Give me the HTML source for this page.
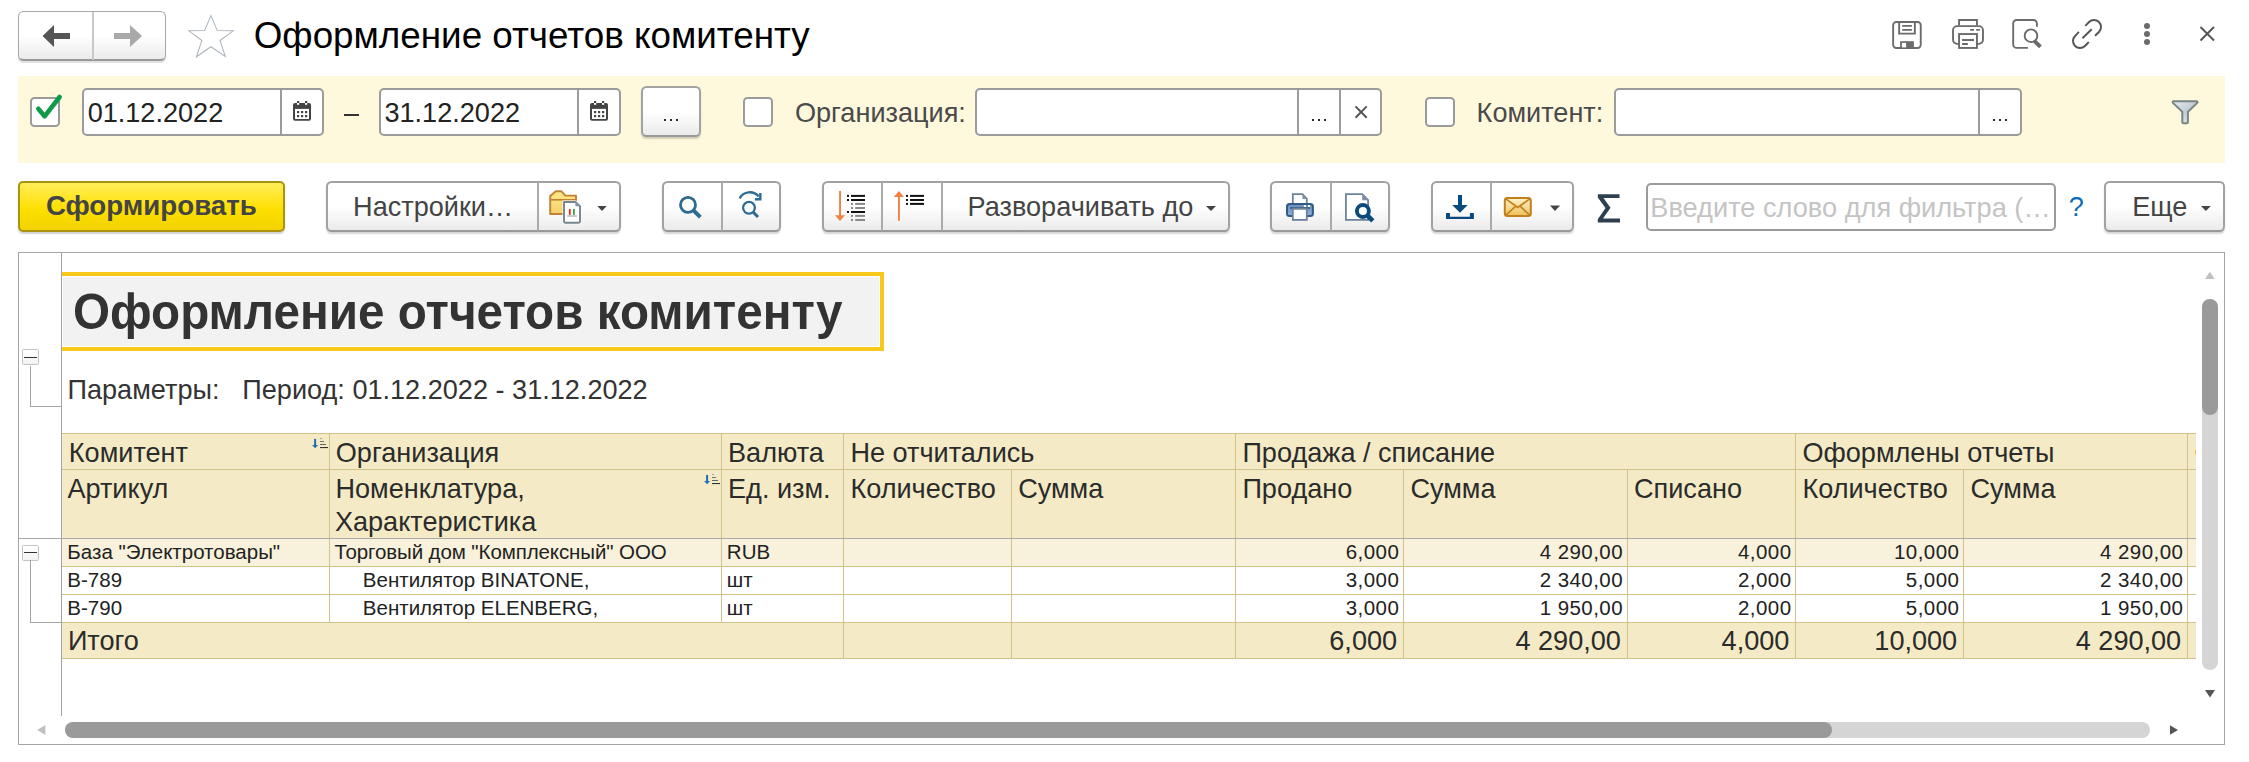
<!DOCTYPE html><html><head><meta charset="utf-8"><style>
html,body{margin:0;padding:0;}
body{width:2249px;height:762px;overflow:hidden;position:relative;background:#fff;font-family:"Liberation Sans", sans-serif;}
.t{position:absolute;white-space:pre;line-height:1;}
svg{overflow:visible}
</style></head><body><div style="position:absolute;left:18px;top:11px;width:148px;height:49.5px;background:linear-gradient(#ffffff 0%,#ffffff 50%,#ebebeb 100%);box-sizing:border-box;border:1.5px solid #a9a9a9;border-bottom:2px solid #999;border-radius:5.5px;box-shadow:0 1.5px 1px rgba(0,0,0,0.12);"></div><div style="position:absolute;left:92.3px;top:12px;width:1.5px;height:47.5px;background:#c8c8c8;"></div><svg style="position:absolute;left:0px;top:0px;" width="200" height="70" viewBox="0 0 200 70"><polygon points="42.5,36 54,25 54,33 70,33 70,39 54,39 54,47" fill="#555"/><polygon points="142,36 130,25 130,33 114,33 114,39 130,39 130,47" fill="#a9a9a9"/></svg><svg style="position:absolute;left:0px;top:0px;" width="260" height="70" viewBox="0 0 260 70"><polygon points="210.9,15.6 217.3,30.6 233.2,30.8 220,40.5 225.3,56.4 210.9,46.7 196.4,56.8 201.9,40.5 188.9,30.8 204.6,30.6" fill="none" stroke="#adb5bd" stroke-width="1.05" stroke-linejoin="miter"/></svg><div class="t" style="left:253.74px;top:17.85px;font-size:36.8px;color:#000;font-weight:400;">Оформление отчетов комитенту</div><svg style="position:absolute;left:1880px;top:0px" width="369" height="60" viewBox="1880 0 369 60">
<g fill="none" stroke="#6b6b6b" stroke-width="1.9">
 <rect x="1893.15" y="22.05" width="27.6" height="25.9" rx="3.2"/>
 <path d="M1899.15 22 V33.65 H1914.85 V22"/>
 <path d="M1902.2 25.9 H1911.9 M1902.2 29.9 H1911.9"/>
</g>
<rect x="1900.1" y="41.2" width="13.8" height="7.7" fill="#6b6b6b"/><rect x="1901.9" y="42.9" width="4.2" height="4.5" fill="#fff"/>
<g fill="none" stroke="#6b6b6b" stroke-width="1.9">
 <path d="M1959.05 25.2 V19.95 H1976.95 V25.2"/>
 <path d="M1959.05 43.85 H1957.05 A4 4 0 0 1 1953.05 39.85 V30.15 A4 4 0 0 1 1957.05 26.15 H1978.95 A4 4 0 0 1 1982.95 30.15 V39.85 A4 4 0 0 1 1978.95 43.85 H1976.95"/>
 <rect x="1959.05" y="34.05" width="17.9" height="13.9" fill="#fff"/>
 <path d="M1962.1 40 H1974 M1962.1 44 H1967.9 M1970.2 29.9 H1974 M1976.2 29.9 H1979.9"/>
</g>
<g fill="none" stroke="#6b6b6b" stroke-width="1.9">
 <path d="M2027.9 47.9 H2016.7 A3.5 3.5 0 0 1 2013.2 44.4 V23.5 A3.5 3.5 0 0 1 2016.7 20 H2033.4 A3.5 3.5 0 0 1 2036.9 23.5 V26.7"/>
 <circle cx="2031" cy="35.7" r="6.3"/>
</g>
<line x1="2034.6" y1="41.1" x2="2040.4" y2="46.9" stroke="#6b6b6b" stroke-width="4"/>
<g fill="none" stroke="#555" stroke-width="1.95">
 <path d="M2085.3 25.9 L2089.05 22.05 A7 7 0 0 1 2098.95 31.95 L2095 35.7"/>
 <path d="M2078.9 31.9 L2075.05 36.05 A7 7 0 0 0 2084.95 45.95 L2088.8 42"/>
 <path d="M2082.4 38.3 L2091.7 29.3"/>
</g>
<circle cx="2147" cy="26" r="3" fill="#6b6b6b"/><circle cx="2147" cy="34" r="3" fill="#6b6b6b"/><circle cx="2147" cy="42" r="3" fill="#6b6b6b"/>
<g stroke="#555" stroke-width="2"><line x1="2200.5" y1="27" x2="2214" y2="40.5"/><line x1="2214" y1="27" x2="2200.5" y2="40.5"/></g>
</svg><div style="position:absolute;left:18px;top:76px;width:2207px;height:87px;background:#fef8dc;"></div><div style="position:absolute;left:30px;top:97px;width:30px;height:30px;background:#fff;box-sizing:border-box;border:2px solid #9b9b9b;border-radius:4.5px;"></div><svg style="position:absolute;left:0px;top:0px;" width="80" height="140" viewBox="0 0 80 140"><polyline points="38.3,108.8 44.6,116.3 59.6,97" fill="none" stroke="#0f9a48" stroke-width="4.6" stroke-linecap="round" stroke-linejoin="round"/></svg><div style="position:absolute;left:82px;top:88px;width:242px;height:48.3px;background:#fff;box-sizing:border-box;border:2px solid #9b9b9b;border-radius:5px;"></div><div style="position:absolute;left:280px;top:89px;width:2px;height:46.3px;background:#9b9b9b;"></div><div class="t" style="left:87.64px;top:98.76px;font-size:27.1px;color:#222;font-weight:400;">01.12.2022</div><svg style="position:absolute;left:293px;top:101px;" width="20" height="22" viewBox="0 0 20 22"><rect x="0" y="2" width="18" height="17.8" rx="2" fill="#444"/>
    <rect x="2" y="7.9" width="14" height="10.1" fill="#fff"/>
    <g fill="#444"><rect x="4" y="10" width="2.2" height="2.2"/><rect x="8" y="10" width="2.2" height="2.2"/><rect x="12" y="10" width="2.2" height="2.2"/>
    <rect x="4" y="14" width="2.2" height="2.2"/><rect x="8" y="14" width="2.2" height="2.2"/><rect x="12" y="14" width="2.2" height="2.2"/>
    <rect x="4" y="0" width="2.2" height="2"/><rect x="12" y="0" width="2.2" height="2"/></g>
    <g fill="#fff"><rect x="4" y="2" width="2.2" height="1.8"/><rect x="12" y="2" width="2.2" height="1.8"/></g></svg><div style="position:absolute;left:344px;top:113.8px;width:15px;height:2px;background:#333;"></div><div style="position:absolute;left:379px;top:88px;width:242px;height:48.3px;background:#fff;box-sizing:border-box;border:2px solid #9b9b9b;border-radius:5px;"></div><div style="position:absolute;left:577px;top:89px;width:2px;height:46.3px;background:#9b9b9b;"></div><div class="t" style="left:384.44px;top:98.56px;font-size:27.1px;color:#222;font-weight:400;">31.12.2022</div><svg style="position:absolute;left:590px;top:101px;" width="20" height="22" viewBox="0 0 20 22"><rect x="0" y="2" width="18" height="17.8" rx="2" fill="#444"/>
    <rect x="2" y="7.9" width="14" height="10.1" fill="#fff"/>
    <g fill="#444"><rect x="4" y="10" width="2.2" height="2.2"/><rect x="8" y="10" width="2.2" height="2.2"/><rect x="12" y="10" width="2.2" height="2.2"/>
    <rect x="4" y="14" width="2.2" height="2.2"/><rect x="8" y="14" width="2.2" height="2.2"/><rect x="12" y="14" width="2.2" height="2.2"/>
    <rect x="4" y="0" width="2.2" height="2"/><rect x="12" y="0" width="2.2" height="2"/></g>
    <g fill="#fff"><rect x="4" y="2" width="2.2" height="1.8"/><rect x="12" y="2" width="2.2" height="1.8"/></g></svg><div style="position:absolute;left:641px;top:86px;width:59.5px;height:50.5px;background:linear-gradient(#ffffff 0%,#ffffff 50%,#ebebeb 100%);box-sizing:border-box;border:2px solid #a2a2a2;border-bottom-color:#999;border-radius:5.5px;box-shadow:0 2px 1.5px rgba(0,0,0,0.17);"></div><div style="position:absolute;left:664px;top:119px;width:2px;height:2px;background:#2a2a2a;"></div><div style="position:absolute;left:670px;top:119px;width:2px;height:2px;background:#2a2a2a;"></div><div style="position:absolute;left:676px;top:119px;width:2px;height:2px;background:#2a2a2a;"></div><div style="position:absolute;left:743px;top:97px;width:30px;height:30px;background:#fff;box-sizing:border-box;border:2px solid #9b9b9b;border-radius:4.5px;"></div><div class="t" style="left:794.94px;top:98.76px;font-size:27.1px;color:#4a4a4a;font-weight:400;">Организация:</div><div style="position:absolute;left:975px;top:88px;width:407px;height:48.3px;background:#fff;box-sizing:border-box;border:2px solid #9b9b9b;border-radius:5px;"></div><div style="position:absolute;left:1297px;top:89px;width:2px;height:46.3px;background:#9b9b9b;"></div><div style="position:absolute;left:1339px;top:89px;width:2px;height:46.3px;background:#9b9b9b;"></div><div style="position:absolute;left:1312px;top:119px;width:2px;height:2px;background:#2a2a2a;"></div><div style="position:absolute;left:1318px;top:119px;width:2px;height:2px;background:#2a2a2a;"></div><div style="position:absolute;left:1324px;top:119px;width:2px;height:2px;background:#2a2a2a;"></div><svg style="position:absolute;left:1350px;top:100px;" width="25" height="25" viewBox="0 0 25 25"><g stroke="#555" stroke-width="2"><line x1="5.5" y1="6.4" x2="16.7" y2="17.7"/><line x1="16.7" y1="6.4" x2="5.5" y2="17.7"/></g></svg><div style="position:absolute;left:1425px;top:97px;width:30px;height:30px;background:#fff;box-sizing:border-box;border:2px solid #9b9b9b;border-radius:4.5px;"></div><div class="t" style="left:1476.60px;top:98.76px;font-size:27.1px;color:#4a4a4a;font-weight:400;">Комитент:</div><div style="position:absolute;left:1614px;top:88px;width:408px;height:48.3px;background:#fff;box-sizing:border-box;border:2px solid #9b9b9b;border-radius:5px;"></div><div style="position:absolute;left:1978px;top:89px;width:2px;height:46.3px;background:#9b9b9b;"></div><div style="position:absolute;left:1993px;top:119px;width:2px;height:2px;background:#2a2a2a;"></div><div style="position:absolute;left:1999px;top:119px;width:2px;height:2px;background:#2a2a2a;"></div><div style="position:absolute;left:2005px;top:119px;width:2px;height:2px;background:#2a2a2a;"></div><svg style="position:absolute;left:2160px;top:90px;" width="50" height="45" viewBox="0 0 50 45"><defs><linearGradient id="fg" x1="0" y1="0" x2="1" y2="1"><stop offset="0" stop-color="#e8ebef"/><stop offset="0.5" stop-color="#c5ccd6"/><stop offset="1" stop-color="#f4f5f7"/></linearGradient></defs>
<path d="M13.6 11.3 H36.6 a0.9 0.9 0 0 1 0.65 1.55 L27.9 21.9 V32.2 a1 1 0 0 1 -1 1 H23.3 a1 1 0 0 1 -1 -1 V21.9 L12.95 12.85 a0.9 0.9 0 0 1 0.65 -1.55 Z" fill="url(#fg)" stroke="#778585" stroke-width="2" stroke-linejoin="round"/></svg><div style="position:absolute;left:18px;top:181px;width:266.5px;height:51px;box-sizing:border-box;border:2px solid #a89410;border-radius:5px;background:linear-gradient(#ffee5a 0%,#ffe31a 40%,#fde000 55%,#f2d200 100%);box-shadow:0 2px 1.5px rgba(0,0,0,0.18);"></div><div class="t" style="left:45.89px;top:191.95px;font-size:27.7px;color:#444;font-weight:700;">Сформировать</div><div style="position:absolute;left:326px;top:181px;width:294.5px;height:51px;background:linear-gradient(#ffffff 0%,#ffffff 50%,#ebebeb 100%);box-sizing:border-box;border:2px solid #a2a2a2;border-bottom-color:#999;border-radius:5.5px;box-shadow:0 2px 1.5px rgba(0,0,0,0.17);"></div><div style="position:absolute;left:537px;top:182px;width:2px;height:49px;background:#aaaaaa;"></div><div class="t" style="left:353.10px;top:193.06px;font-size:27.1px;color:#444;font-weight:400;">Настройки…</div><svg style="position:absolute;left:540px;top:185px" width="75" height="45" viewBox="540 185 75 45"><defs><linearGradient id="fold" x1="0" y1="0" x2="0" y2="1"><stop offset="0" stop-color="#fde98a"/><stop offset="1" stop-color="#f5d06a"/></linearGradient></defs>
<path d="M550.2 214 V196 L555.8 191.2 H561.2 L565.4 195.6 H576 V214 Z" fill="url(#fold)" stroke="#c28234" stroke-width="1.9" stroke-linejoin="round"/>
<line x1="550.2" y1="199.8" x2="576" y2="199.8" stroke="#c28234" stroke-width="1.6"/>
<path d="M564 202 H575.4 L580 206.2 V221.3 a1.5 1.5 0 0 1 -1.5 1.5 H565.5 a1.5 1.5 0 0 1 -1.5 -1.5 Z" fill="#fff" stroke="#fff" stroke-width="3"/>
<path d="M564 202 H575.4 L580 206.2 V221.3 a1.5 1.5 0 0 1 -1.5 1.5 H565.5 a1.5 1.5 0 0 1 -1.5 -1.5 Z" fill="#fff" stroke="#748590" stroke-width="1.9" stroke-linejoin="round"/>
<path d="M575.4 202 L580 206.2 H575.4 Z" fill="#8a99a4"/>
<rect x="568.9" y="208.9" width="1.8" height="6" fill="#e8281e"/><rect x="573" y="208.9" width="1.8" height="6" fill="#3aa53a"/>
<rect x="567.2" y="215.4" width="9.7" height="1.2" fill="#aaa"/></svg><svg style="position:absolute;left:590px;top:200px" width="25" height="15" viewBox="590 200 25 15"><polygon points="597.3,206 606.7,206 602,210.9" fill="#444"/></svg><div style="position:absolute;left:661.5px;top:181px;width:119.5px;height:51px;background:linear-gradient(#ffffff 0%,#ffffff 50%,#ebebeb 100%);box-sizing:border-box;border:2px solid #a2a2a2;border-bottom-color:#999;border-radius:5.5px;box-shadow:0 2px 1.5px rgba(0,0,0,0.17);"></div><div style="position:absolute;left:721px;top:182px;width:2px;height:49px;background:#aaaaaa;"></div><svg style="position:absolute;left:670px;top:185px" width="105" height="43" viewBox="670 185 105 43"><g fill="none" stroke="#2d6a94"><circle cx="688" cy="204.9" r="7.5" stroke-width="2.8"/><line x1="693.6" y1="210.5" x2="700.3" y2="217.2" stroke-width="3.9"/>
<circle cx="749" cy="207.8" r="5.9" stroke-width="2.2"/><line x1="753.4" y1="212.4" x2="758" y2="217" stroke-width="3"/>
<path d="M739.6 198.4 A11.5 11.5 0 0 1 758.6 196.5" stroke-width="2.4"/>
<path d="M760.3 193 V199.3 H754.9" stroke-width="2.4"/></g></svg><div style="position:absolute;left:821.5px;top:181px;width:408px;height:51px;background:linear-gradient(#ffffff 0%,#ffffff 50%,#ebebeb 100%);box-sizing:border-box;border:2px solid #a2a2a2;border-bottom-color:#999;border-radius:5.5px;box-shadow:0 2px 1.5px rgba(0,0,0,0.17);"></div><div style="position:absolute;left:881px;top:182px;width:2px;height:49px;background:#aaaaaa;"></div><div style="position:absolute;left:941px;top:182px;width:2px;height:49px;background:#aaaaaa;"></div><svg style="position:absolute;left:830px;top:185px" width="100" height="43" viewBox="830 185 100 43"><rect x="839.1" y="190.9" width="1.9" height="25" fill="#f08246"/><polygon points="834.9,215.2 845.1,215.2 840,221.1" fill="#f08246"/>
<g fill="#111"><rect x="847" y="194.9" width="2" height="2"/><rect x="851" y="194.9" width="14" height="2"/><rect x="847" y="199" width="2" height="2"/><rect x="851" y="199" width="14" height="2"/><rect x="847" y="211" width="2" height="2"/><rect x="851" y="211" width="14" height="2"/></g>
<g fill="#8a8a8a"><rect x="851" y="202.9" width="2" height="2"/><rect x="855.2" y="202.9" width="9.8" height="2"/><rect x="851" y="207" width="2" height="2"/><rect x="855.2" y="207" width="9.8" height="2"/><rect x="851" y="214.9" width="2" height="2"/><rect x="855.2" y="214.9" width="9.8" height="2"/><rect x="851" y="219" width="2" height="2"/><rect x="855.2" y="219" width="9.8" height="2"/></g>
<polygon points="893.8,196.9 904,196.9 898.9,190.9" fill="#f08246"/><rect x="898" y="196" width="1.9" height="24.8" fill="#f08246"/>
<g fill="#111"><rect x="906" y="194.9" width="2" height="2"/><rect x="910" y="194.9" width="14" height="2"/><rect x="906" y="199" width="2" height="2"/><rect x="910" y="199" width="14" height="2"/><rect x="906" y="202.9" width="2" height="2"/><rect x="910" y="202.9" width="14" height="2"/></g></svg><div class="t" style="left:967.60px;top:193.06px;font-size:27.1px;color:#444;font-weight:400;">Разворачивать до</div><svg style="position:absolute;left:1200px;top:200px" width="25" height="15" viewBox="1200 200 25 15"><polygon points="1206,206 1216,206 1211,210.9" fill="#444"/></svg><div style="position:absolute;left:1270px;top:181px;width:119.5px;height:51px;background:linear-gradient(#ffffff 0%,#ffffff 50%,#ebebeb 100%);box-sizing:border-box;border:2px solid #a2a2a2;border-bottom-color:#999;border-radius:5.5px;box-shadow:0 2px 1.5px rgba(0,0,0,0.17);"></div><div style="position:absolute;left:1330px;top:182px;width:2px;height:49px;background:#aaaaaa;"></div><svg style="position:absolute;left:1280px;top:185px" width="105" height="43" viewBox="1280 185 105 43"><path d="M1292.8 203 V194.1 H1302.5 L1306.8 198.9 V203" fill="#fff" stroke="#6e8399" stroke-width="1.8"/>
<path d="M1302.5 194.1 L1306.8 198.9 H1302.5 Z" fill="#7d90a5"/>
<defs><linearGradient id="pg" x1="0" y1="0" x2="0" y2="1"><stop offset="0" stop-color="#6a8fbd"/><stop offset="1" stop-color="#8fb1d9"/></linearGradient></defs>
<rect x="1287" y="204.1" width="25.9" height="11.8" rx="2.5" fill="url(#pg)" stroke="#2f5b86" stroke-width="2"/>
<rect x="1290" y="207.2" width="20" height="1.6" fill="#3a5a7a"/>
<rect x="1303.8" y="205" width="2.2" height="2" fill="#fff"/><rect x="1308" y="205" width="2" height="2" fill="#fff"/>
<rect x="1292.8" y="208.8" width="14" height="11.1" fill="#fff" stroke="#6e8399" stroke-width="1.8"/>
<path d="M1345.9 219.9 V194.1 H1362.2 L1368.1 200.2 V219.9 Z" fill="#fff" stroke="#6e8399" stroke-width="1.8"/>
<path d="M1362.2 194.1 L1368.1 200.2 H1362.2 Z" fill="#7d90a5"/>
<circle cx="1362.9" cy="211" r="7" fill="#fff" stroke="#fff" stroke-width="1"/>
<circle cx="1362.9" cy="211" r="6" fill="#fff" stroke="#0b4a7a" stroke-width="3.9"/>
<line x1="1367.6" y1="215.7" x2="1372.8" y2="220.9" stroke="#0b4a7a" stroke-width="4.6"/></svg><div style="position:absolute;left:1430.5px;top:181px;width:143px;height:51px;background:linear-gradient(#ffffff 0%,#ffffff 50%,#ebebeb 100%);box-sizing:border-box;border:2px solid #a2a2a2;border-bottom-color:#999;border-radius:5.5px;box-shadow:0 2px 1.5px rgba(0,0,0,0.17);"></div><div style="position:absolute;left:1490px;top:182px;width:2px;height:49px;background:#aaaaaa;"></div><svg style="position:absolute;left:1440px;top:185px" width="135" height="43" viewBox="1440 185 135 43"><rect x="1458" y="195" width="4" height="10.5" fill="#0a4a7e"/><polygon points="1452.2,205 1467.7,205 1460,212.8" fill="#0a4a7e"/>
<path d="M1446 212.9 H1450 V216.8 H1469.9 V212.9 H1473.9 V218.9 H1446 Z" fill="#0a4a7e"/>
<defs><linearGradient id="eg" x1="0" y1="0" x2="0" y2="1"><stop offset="0" stop-color="#fff3cc"/><stop offset="1" stop-color="#f0c05a"/></linearGradient></defs>
<rect x="1504.8" y="197.9" width="26" height="18" rx="2.5" fill="url(#eg)" stroke="#c0801e" stroke-width="2"/>
<path d="M1505.8 198.9 L1517.8 207.4 L1529.8 198.9 M1506 215.2 L1515.2 206.7 M1529.6 215.2 L1520.6 206.7" fill="none" stroke="#c0801e" stroke-width="1.7"/></svg><svg style="position:absolute;left:1545px;top:200px" width="25" height="15" viewBox="1545 200 25 15"><polygon points="1550,205.6 1560,205.6 1555,210.9" fill="#444"/></svg><svg style="position:absolute;left:1590px;top:188px" width="40" height="40" viewBox="1590 188 40 40"><path d="M1597.8 194.2 H1619.5 V198 H1603.5 L1610.5 207.8 L1603 218.5 H1620 V222.4 H1597.8 V219.2 L1605.5 208 L1597.8 197.4 Z" fill="#2e3f50"/></svg><div style="position:absolute;left:1646.4px;top:183.3px;width:409.4px;height:48px;background:#fff;box-sizing:border-box;border:2px solid #9b9b9b;border-radius:5px;"></div><div class="t" style="left:1650.30px;top:193.98px;font-size:27.2px;color:#c4c4c4;font-weight:400;">Введите слово для фильтра (…</div><div class="t" style="left:2068.87px;top:193.06px;font-size:27.1px;color:#0f6cb8;font-weight:400;">?</div><div style="position:absolute;left:2104px;top:181px;width:120.5px;height:51px;background:linear-gradient(#ffffff 0%,#ffffff 50%,#ebebeb 100%);box-sizing:border-box;border:2px solid #a2a2a2;border-bottom-color:#999;border-radius:5.5px;box-shadow:0 2px 1.5px rgba(0,0,0,0.17);"></div><div class="t" style="left:2132.20px;top:193.06px;font-size:27.1px;color:#444;font-weight:400;">Еще</div><svg style="position:absolute;left:2195px;top:200px" width="25" height="15" viewBox="2195 200 25 15"><polygon points="2201,206 2210.8,206 2205.9,210.9" fill="#444"/></svg><div style="position:absolute;left:18px;top:252px;width:2207px;height:493px;box-sizing:border-box;border:1.3px solid #a5a5a5;"></div><div style="position:absolute;left:61px;top:252.5px;width:1.2px;height:463.5px;background:#a5a5a5;"></div><div style="position:absolute;left:61.5px;top:272px;width:822.5px;height:79px;box-sizing:border-box;border:4px solid #f8c91c;border-left:none;background:#f2f2f2;box-shadow:inset 0 0 0 1px #fff;"></div><div class="t" style="left:72.69px;top:287.11px;font-size:50.67px;color:#333;font-weight:700;transform:scaleX(0.94);transform-origin:0 0;">Оформление отчетов комитенту</div><div style="position:absolute;left:22.2px;top:349.2px;width:16.4px;height:16.3px;box-sizing:border-box;border:1px solid #c4c4c4;border-radius:1.5px;background:linear-gradient(#fff,#f2f2f2);"></div><div style="position:absolute;left:24px;top:356.7px;width:13px;height:1.4px;background:#333;"></div><div style="position:absolute;left:30.2px;top:365.5px;width:1.1px;height:41px;background:#a5a5a5;"></div><div style="position:absolute;left:30.2px;top:405.8px;width:31px;height:1.1px;background:#a5a5a5;"></div><div class="t" style="left:67.50px;top:376.06px;font-size:27.1px;color:#333;font-weight:400;">Параметры:</div><div class="t" style="left:242.30px;top:376.06px;font-size:27.1px;color:#333;font-weight:400;">Период: 01.12.2022 - 31.12.2022</div><div style="position:absolute;left:0;top:0;width:2196px;height:762px;overflow:hidden;"><div style="position:absolute;left:61.5px;top:433.2px;width:2134.5px;height:105.2px;background:#f4ebc6;"></div><div style="position:absolute;left:61.5px;top:538.4px;width:2134.5px;height:28px;background:#f8f2dc;"></div><div style="position:absolute;left:61.5px;top:622.2px;width:2134.5px;height:36.1px;background:#f4ebc6;"></div><div style="position:absolute;left:61.5px;top:432.8px;width:2134.5px;height:1.2px;background:#cfc28a;"></div><div style="position:absolute;left:61.5px;top:468.8px;width:2134.5px;height:1.2px;background:#cfc28a;"></div><div style="position:absolute;left:61.5px;top:566.0px;width:2134.5px;height:1.2px;background:#cfc28a;"></div><div style="position:absolute;left:61.5px;top:593.9px;width:2134.5px;height:1.2px;background:#cfc28a;"></div><div style="position:absolute;left:61.5px;top:621.8px;width:2134.5px;height:1.2px;background:#cfc28a;"></div><div style="position:absolute;left:61.5px;top:657.9px;width:2134.5px;height:1.2px;background:#cfc28a;"></div><div style="position:absolute;left:18.5px;top:538.0px;width:2177.5px;height:1.2px;background:#a8a8a8;"></div><div style="position:absolute;left:328.9px;top:433px;width:1.2px;height:105px;background:#cfc28a;"></div><div style="position:absolute;left:721.1px;top:433px;width:1.2px;height:105px;background:#cfc28a;"></div><div style="position:absolute;left:843.1px;top:433px;width:1.2px;height:105px;background:#cfc28a;"></div><div style="position:absolute;left:1235.2px;top:433px;width:1.2px;height:105px;background:#cfc28a;"></div><div style="position:absolute;left:1795.2px;top:433px;width:1.2px;height:105px;background:#cfc28a;"></div><div style="position:absolute;left:2187.0px;top:433px;width:1.2px;height:105px;background:#cfc28a;"></div><div style="position:absolute;left:1011.0px;top:469px;width:1.2px;height:69px;background:#cfc28a;"></div><div style="position:absolute;left:1402.9px;top:469px;width:1.2px;height:69px;background:#cfc28a;"></div><div style="position:absolute;left:1626.7px;top:469px;width:1.2px;height:69px;background:#cfc28a;"></div><div style="position:absolute;left:1963.0px;top:469px;width:1.2px;height:69px;background:#cfc28a;"></div><div style="position:absolute;left:328.9px;top:538.6px;width:1.2px;height:83.39999999999998px;background:#cfc28a;"></div><div style="position:absolute;left:721.1px;top:538.6px;width:1.2px;height:83.39999999999998px;background:#cfc28a;"></div><div style="position:absolute;left:843.1px;top:538.6px;width:1.2px;height:83.39999999999998px;background:#cfc28a;"></div><div style="position:absolute;left:1011.0px;top:538.6px;width:1.2px;height:83.39999999999998px;background:#cfc28a;"></div><div style="position:absolute;left:1235.2px;top:538.6px;width:1.2px;height:83.39999999999998px;background:#cfc28a;"></div><div style="position:absolute;left:1402.9px;top:538.6px;width:1.2px;height:83.39999999999998px;background:#cfc28a;"></div><div style="position:absolute;left:1626.7px;top:538.6px;width:1.2px;height:83.39999999999998px;background:#cfc28a;"></div><div style="position:absolute;left:1795.2px;top:538.6px;width:1.2px;height:83.39999999999998px;background:#cfc28a;"></div><div style="position:absolute;left:1963.0px;top:538.6px;width:1.2px;height:83.39999999999998px;background:#cfc28a;"></div><div style="position:absolute;left:2187.0px;top:538.6px;width:1.2px;height:83.39999999999998px;background:#cfc28a;"></div><div style="position:absolute;left:843.1px;top:622px;width:1.2px;height:36px;background:#cfc28a;"></div><div style="position:absolute;left:1011.0px;top:622px;width:1.2px;height:36px;background:#cfc28a;"></div><div style="position:absolute;left:1235.2px;top:622px;width:1.2px;height:36px;background:#cfc28a;"></div><div style="position:absolute;left:1402.9px;top:622px;width:1.2px;height:36px;background:#cfc28a;"></div><div style="position:absolute;left:1626.7px;top:622px;width:1.2px;height:36px;background:#cfc28a;"></div><div style="position:absolute;left:1795.2px;top:622px;width:1.2px;height:36px;background:#cfc28a;"></div><div style="position:absolute;left:1963.0px;top:622px;width:1.2px;height:36px;background:#cfc28a;"></div><div style="position:absolute;left:2187.0px;top:622px;width:1.2px;height:36px;background:#cfc28a;"></div><div class="t" style="left:68.80px;top:439.06px;font-size:27.1px;color:#2b2b2b;font-weight:400;">Комитент</div><div class="t" style="left:335.80px;top:439.06px;font-size:27.1px;color:#2b2b2b;font-weight:400;">Организация</div><div class="t" style="left:728.00px;top:439.06px;font-size:27.1px;color:#2b2b2b;font-weight:400;">Валюта</div><div class="t" style="left:850.40px;top:439.06px;font-size:27.1px;color:#2b2b2b;font-weight:400;">Не отчитались</div><div class="t" style="left:1242.40px;top:439.06px;font-size:27.1px;color:#2b2b2b;font-weight:400;">Продажа / списание</div><div class="t" style="left:1802.40px;top:439.06px;font-size:27.1px;color:#2b2b2b;font-weight:400;">Оформлены отчеты</div><div class="t" style="left:2194.40px;top:439.06px;font-size:27.1px;color:#2b2b2b;font-weight:400;">О</div><div class="t" style="left:67.40px;top:475.06px;font-size:27.1px;color:#2b2b2b;font-weight:400;">Артикул</div><div class="t" style="left:335.40px;top:475.06px;font-size:27.1px;color:#2b2b2b;font-weight:400;">Номенклатура,</div><div class="t" style="left:728.00px;top:475.06px;font-size:27.1px;color:#2b2b2b;font-weight:400;">Ед. изм.</div><div class="t" style="left:850.40px;top:475.06px;font-size:27.1px;color:#2b2b2b;font-weight:400;">Количество</div><div class="t" style="left:1018.20px;top:475.06px;font-size:27.1px;color:#2b2b2b;font-weight:400;">Сумма</div><div class="t" style="left:1242.40px;top:475.06px;font-size:27.1px;color:#2b2b2b;font-weight:400;">Продано</div><div class="t" style="left:1410.40px;top:475.06px;font-size:27.1px;color:#2b2b2b;font-weight:400;">Сумма</div><div class="t" style="left:1634.00px;top:475.06px;font-size:27.1px;color:#2b2b2b;font-weight:400;">Списано</div><div class="t" style="left:1802.40px;top:475.06px;font-size:27.1px;color:#2b2b2b;font-weight:400;">Количество</div><div class="t" style="left:1970.40px;top:475.06px;font-size:27.1px;color:#2b2b2b;font-weight:400;">Сумма</div><div class="t" style="left:334.90px;top:507.56px;font-size:27.1px;color:#2b2b2b;font-weight:400;">Характеристика</div><svg style="position:absolute;left:312px;top:438px;" width="18" height="12" viewBox="0 0 18 12"><rect x="2.1" y="0.9" width="2" height="6.6" fill="#1f6fb5"/><polygon points="0.1,7 6.1,7 3.1,10.2" fill="#1f6fb5"/><rect x="8" y="0.2" width="2" height="0.9" fill="#999"/><rect x="8" y="3" width="4" height="0.9" fill="#666"/><rect x="8" y="6.1" width="6" height="0.9" fill="#555"/><rect x="8" y="9" width="8" height="1.1" fill="#333"/></svg><svg style="position:absolute;left:703.7px;top:473.8px;" width="18" height="12" viewBox="0 0 18 12"><rect x="2.1" y="0.9" width="2" height="6.6" fill="#1f6fb5"/><polygon points="0.1,7 6.1,7 3.1,10.2" fill="#1f6fb5"/><rect x="8" y="0.2" width="2" height="0.9" fill="#999"/><rect x="8" y="3" width="4" height="0.9" fill="#666"/><rect x="8" y="6.1" width="6" height="0.9" fill="#555"/><rect x="8" y="9" width="8" height="1.1" fill="#333"/></svg><div class="t" style="left:67.36px;top:542.35px;font-size:20.5px;color:#222;font-weight:400;">База "Электротовары"</div><div class="t" style="left:334.60px;top:542.35px;font-size:20.5px;color:#222;font-weight:400;letter-spacing:-0.1px;">Торговый дом "Комплексный" ООО</div><div class="t" style="left:726.87px;top:542.35px;font-size:20.5px;color:#222;font-weight:400;">RUB</div><div class="t" style="right:796.73px;top:542.35px;font-size:20.5px;color:#222;font-weight:400;text-align:right;letter-spacing:0.45px;">6,000</div><div class="t" style="right:572.93px;top:542.35px;font-size:20.5px;color:#222;font-weight:400;text-align:right;letter-spacing:0.45px;">4 290,00</div><div class="t" style="right:404.43px;top:542.35px;font-size:20.5px;color:#222;font-weight:400;text-align:right;letter-spacing:0.45px;">4,000</div><div class="t" style="right:236.63px;top:542.35px;font-size:20.5px;color:#222;font-weight:400;text-align:right;letter-spacing:0.45px;">10,000</div><div class="t" style="right:12.63px;top:542.35px;font-size:20.5px;color:#222;font-weight:400;text-align:right;letter-spacing:0.45px;">4 290,00</div><div class="t" style="left:67.36px;top:570.25px;font-size:20.5px;color:#222;font-weight:400;">B-789</div><div class="t" style="left:362.87px;top:570.25px;font-size:20.5px;color:#222;font-weight:400;">Вентилятор BINATONE,</div><div class="t" style="left:726.87px;top:570.25px;font-size:20.5px;color:#222;font-weight:400;">шт</div><div class="t" style="right:796.73px;top:570.25px;font-size:20.5px;color:#222;font-weight:400;text-align:right;letter-spacing:0.45px;">3,000</div><div class="t" style="right:572.93px;top:570.25px;font-size:20.5px;color:#222;font-weight:400;text-align:right;letter-spacing:0.45px;">2 340,00</div><div class="t" style="right:404.43px;top:570.25px;font-size:20.5px;color:#222;font-weight:400;text-align:right;letter-spacing:0.45px;">2,000</div><div class="t" style="right:236.63px;top:570.25px;font-size:20.5px;color:#222;font-weight:400;text-align:right;letter-spacing:0.45px;">5,000</div><div class="t" style="right:12.63px;top:570.25px;font-size:20.5px;color:#222;font-weight:400;text-align:right;letter-spacing:0.45px;">2 340,00</div><div class="t" style="left:67.36px;top:598.05px;font-size:20.5px;color:#222;font-weight:400;">B-790</div><div class="t" style="left:362.87px;top:598.05px;font-size:20.5px;color:#222;font-weight:400;">Вентилятор ELENBERG,</div><div class="t" style="left:726.87px;top:598.05px;font-size:20.5px;color:#222;font-weight:400;">шт</div><div class="t" style="right:796.73px;top:598.05px;font-size:20.5px;color:#222;font-weight:400;text-align:right;letter-spacing:0.45px;">3,000</div><div class="t" style="right:572.93px;top:598.05px;font-size:20.5px;color:#222;font-weight:400;text-align:right;letter-spacing:0.45px;">1 950,00</div><div class="t" style="right:404.43px;top:598.05px;font-size:20.5px;color:#222;font-weight:400;text-align:right;letter-spacing:0.45px;">2,000</div><div class="t" style="right:236.63px;top:598.05px;font-size:20.5px;color:#222;font-weight:400;text-align:right;letter-spacing:0.45px;">5,000</div><div class="t" style="right:12.63px;top:598.05px;font-size:20.5px;color:#222;font-weight:400;text-align:right;letter-spacing:0.45px;">1 950,00</div><div class="t" style="left:67.90px;top:626.96px;font-size:27.1px;color:#2b2b2b;font-weight:400;">Итого</div><div class="t" style="right:798.92px;top:626.96px;font-size:27.1px;color:#2b2b2b;font-weight:400;text-align:right;">6,000</div><div class="t" style="right:575.12px;top:626.96px;font-size:27.1px;color:#2b2b2b;font-weight:400;text-align:right;">4 290,00</div><div class="t" style="right:406.62px;top:626.96px;font-size:27.1px;color:#2b2b2b;font-weight:400;text-align:right;">4,000</div><div class="t" style="right:238.82px;top:626.96px;font-size:27.1px;color:#2b2b2b;font-weight:400;text-align:right;">10,000</div><div class="t" style="right:14.82px;top:626.96px;font-size:27.1px;color:#2b2b2b;font-weight:400;text-align:right;">4 290,00</div></div><div style="position:absolute;left:22.3px;top:544.5px;width:16.3px;height:16px;box-sizing:border-box;border:1px solid #c4c4c4;border-radius:1.5px;background:linear-gradient(#fff,#f2f2f2);"></div><div style="position:absolute;left:24px;top:551.6px;width:12.7px;height:1.3px;background:#333;"></div><div style="position:absolute;left:30px;top:560.4px;width:1.1px;height:62.2px;background:#a5a5a5;"></div><div style="position:absolute;left:30px;top:621.7px;width:31.5px;height:1.1px;background:#a5a5a5;"></div><svg style="position:absolute;left:2200px;top:265px;" width="20" height="20" viewBox="0 0 20 20"><polygon points="5,13.9 14.7,13.9 9.85,6.7" fill="#c0c0c0"/></svg><div style="position:absolute;left:2202px;top:299px;width:16px;height:371px;background:#d5d5d5;border-radius:8px;"></div><div style="position:absolute;left:2202px;top:299px;width:16px;height:116px;background:#9a9a9a;border-radius:8px;"></div><svg style="position:absolute;left:2200px;top:685px;" width="20" height="20" viewBox="0 0 20 20"><polygon points="5,5 15,5 10,12.4" fill="#555"/></svg><svg style="position:absolute;left:30px;top:720px;" width="20" height="20" viewBox="0 0 20 20"><polygon points="15.3,5 15.3,15 7.2,10" fill="#c0c0c0"/></svg><div style="position:absolute;left:65px;top:722px;width:2085px;height:15.8px;background:#d5d5d5;border-radius:8px;"></div><div style="position:absolute;left:65px;top:722px;width:1767px;height:15.8px;background:#9a9a9a;border-radius:8px;"></div><svg style="position:absolute;left:2165px;top:720px;" width="20" height="20" viewBox="0 0 20 20"><polygon points="5,5.3 5,14.7 13,10" fill="#555"/></svg></body></html>
